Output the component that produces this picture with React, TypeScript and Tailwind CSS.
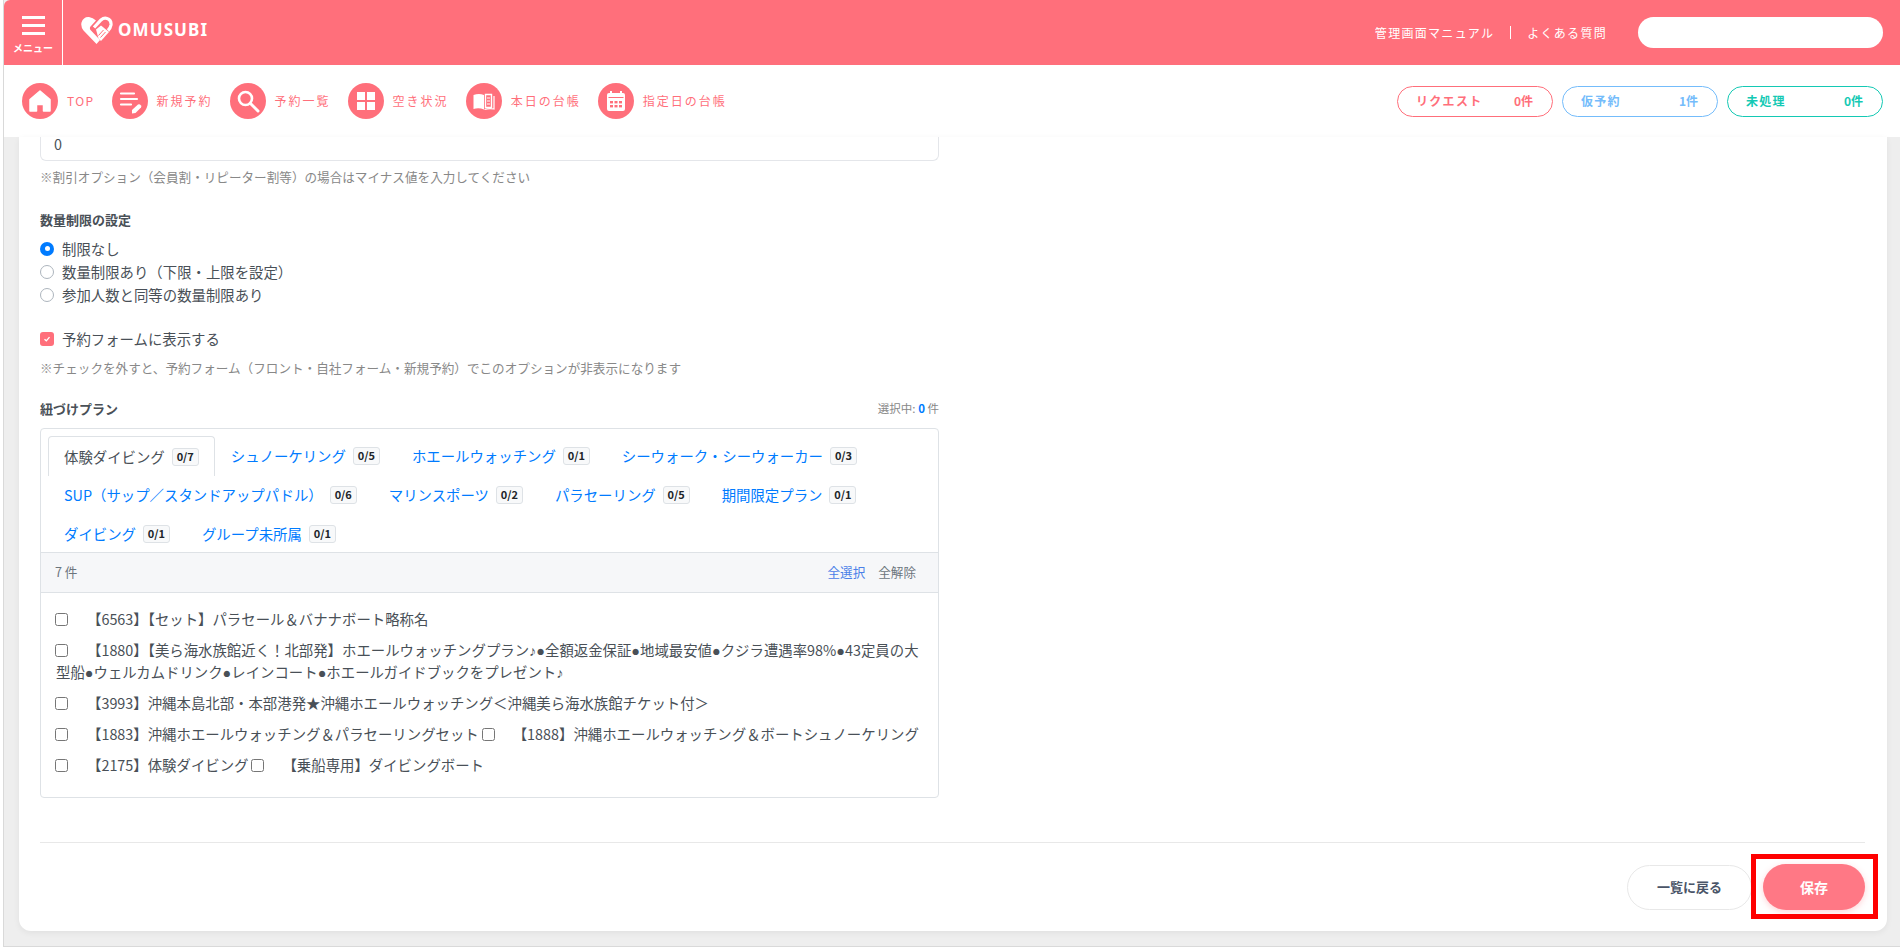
import { Fragment } from 'react';

const font = { fontFamily: '"Noto Sans CJK JP", "Noto Sans", sans-serif' };

const HomeIcon = () => (
  <svg viewBox="0 0 36 36" className="w-9 h-9">
    <path d="M18 8 L28 16.5 V28 H21.5 V21.5 H14.5 V28 H8 V16.5 Z" fill="#fff" stroke="#fff" strokeWidth="1.5" strokeLinejoin="round" />
  </svg>
);

const EditIcon = () => (
  <svg viewBox="0 0 36 36" className="w-9 h-9">
    <path d="M9 10.5 H22 M9 16 H25 M9 21.5 H19" stroke="#fff" strokeWidth="2.2" strokeLinecap="round" fill="none" />
    <path d="M20 27 L26 21.5 Q27 20.8 28 21.5 L29 22.5 Q29.8 23.5 29 24.5 L23.5 30 L20 30.5 Z" fill="#fff" />
  </svg>
);

const SearchIcon = () => (
  <svg viewBox="0 0 36 36" className="w-9 h-9">
    <circle cx="15.5" cy="15.5" r="6.5" fill="none" stroke="#fff" strokeWidth="2.6" />
    <path d="M20.5 20.5 L28 28" stroke="#fff" strokeWidth="3" strokeLinecap="round" />
  </svg>
);

const GridIcon = () => (
  <svg viewBox="0 0 36 36" className="w-9 h-9" fill="#fff">
    <rect x="9" y="9" width="8" height="8" />
    <rect x="19" y="9" width="8" height="8" />
    <rect x="9" y="19" width="8" height="8" />
    <rect x="19" y="19" width="8" height="8" />
  </svg>
);

const BookIcon = () => (
  <svg viewBox="0 0 36 36" className="w-9 h-9">
    <path d="M7.5 12 Q13 10 18 12 V26.5 Q13 24.5 7.5 26 Z" fill="#fff" />
    <path d="M19.5 11.5 H25.5 V24.5 H19.5 Z" fill="none" stroke="#fff" strokeWidth="1.4" />
    <path d="M21 15 H24 M21 18 H24 M21 21 H24" stroke="#fff" strokeWidth="1.2" />
    <path d="M18.5 26.5 Q23 25 28 26 V13" fill="none" stroke="#fff" strokeWidth="1.2" />
  </svg>
);

const CalendarIcon = () => (
  <svg viewBox="0 0 36 36" className="w-9 h-9">
    <rect x="9" y="10" width="18" height="18" rx="2" fill="#fff" />
    <rect x="12" y="8" width="2" height="3" fill="#fff" />
    <rect x="22" y="8" width="2" height="3" fill="#fff" />
    <rect x="10.5" y="14" width="15" height="1" fill="#ff6f7b" />
    <g fill="#ff6f7b">
      <rect x="12" y="18" width="3" height="2.4" />
      <rect x="16.5" y="18" width="3" height="2.4" />
      <rect x="21" y="18" width="3" height="2.4" />
      <rect x="12" y="22" width="3" height="2.4" />
      <rect x="16.5" y="22" width="3" height="2.4" />
      <rect x="21" y="22" width="3" height="2.4" />
    </g>
  </svg>
);

const Logo = () => (
  <svg viewBox="0 0 32 28" className="w-[32px] h-[28px]">
    <path d="M15.5 28 L2.5 14.5 Q-0.5 10.5 0.5 6.5 Q2.5 0.5 8 1 Q12 1.5 15 4.5 L9.5 10.5 Q8 12.5 10 14.5 L19 24 Z" fill="#fff" />
    <path d="M13 11.5 L20 4 Q23 1.5 26 2.5 Q30.5 4 30 9 Q29.5 12 27 14.5" fill="none" stroke="#fff" strokeWidth="3.2" />
    <path d="M15 13.5 L20 9.5 L28 16 L20 25 L17.5 22.5 Z" fill="#fff" />
    <path d="M17.5 19.5 L22.5 14 M19.5 21.5 L24.5 16" stroke="#ff6f7b" strokeWidth="1" />
  </svg>
);

const navItems = [
  { label: 'TOP', icon: <HomeIcon /> },
  { label: '新規予約', icon: <EditIcon /> },
  { label: '予約一覧', icon: <SearchIcon /> },
  { label: '空き状況', icon: <GridIcon /> },
  { label: '本日の台帳', icon: <BookIcon /> },
  { label: '指定日の台帳', icon: <CalendarIcon /> },
];

const tabRows = [
  [
    { name: '体験ダイビング', count: '0/7', active: true },
    { name: 'シュノーケリング', count: '0/5' },
    { name: 'ホエールウォッチング', count: '0/1' },
    { name: 'シーウォーク・シーウォーカー', count: '0/3' },
  ],
  [
    { name: 'SUP（サップ／スタンドアップパドル）', count: '0/6' },
    { name: 'マリンスポーツ', count: '0/2' },
    { name: 'パラセーリング', count: '0/5' },
    { name: '期間限定プラン', count: '0/1' },
  ],
  [
    { name: 'ダイビング', count: '0/1' },
    { name: 'グループ未所属', count: '0/1' },
  ],
];

const Radio = ({ checked, label }: { checked?: boolean; label: string }) => (
  <div className="flex items-center h-[23px] text-[14.4px] text-[#495057]">
    {checked ? (
      <span className="w-[14px] h-[14px] rounded-full bg-[#007bff] flex items-center justify-center mr-[8px]">
        <span className="w-[5px] h-[5px] rounded-full bg-white" />
      </span>
    ) : (
      <span className="w-[14px] h-[14px] rounded-full border border-[#adb5bd] bg-white mr-[8px]" />
    )}
    {label}
  </div>
);

const planRows = [
  ['【6563】【セット】パラセール＆バナナボート略称名'],
  ['【1880】【美ら海水族館近く！北部発】ホエールウォッチングプラン♪●全額返金保証●地域最安値●クジラ遭遇率98%●43定員の大型船●ウェルカムドリンク●レインコート●ホエールガイドブックをプレゼント♪'],
  ['【3993】沖縄本島北部・本部港発★沖縄ホエールウォッチング＜沖縄美ら海水族館チケット付＞'],
  ['【1883】沖縄ホエールウォッチング＆パラセーリングセット', '【1888】沖縄ホエールウォッチング＆ボートシュノーケリング'],
  ['【2175】体験ダイビング', '【乗船専用】ダイビングボート'],
];

// the ● and ♪ in plan names come from a narrower Latin font in the original
const PlanText = ({ text }: { text: string }) => (
  <>
    {text.split(/([●♪])/).map((part, i) =>
      part === '●' || part === '♪' ? (
        <span key={i} className="font-['Liberation_Sans'] leading-none">{part}</span>
      ) : (
        <Fragment key={i}>{part}</Fragment>
      ),
    )}
  </>
);

export default function App() {
  return (
    <div style={font} className="relative h-[950px] w-[1900px] overflow-hidden bg-white pl-[3px]">
      <div className="flex flex-col h-[947px] border-l border-b border-[#d9d9d9] bg-[#eeeeee]">
        {/* Header */}
        <header className="h-[65px] shrink-0 flex items-center bg-[#ff6f7b] rounded-tl-md text-white">
          <div className="w-[59px] h-full border-r border-white flex flex-col items-center pt-[16px]">
            <span className="w-[23px] h-[2.5px] bg-white" />
            <span className="w-[23px] h-[2.5px] bg-white mt-[5.5px]" />
            <span className="w-[23px] h-[2.5px] bg-white mt-[5.5px]" />
            <span className="text-[10px] font-bold mt-[8px] leading-none">メニュー</span>
          </div>
          <div className="flex items-center ml-[18px] -mt-[5px]">
            <Logo />
            <span className="ml-[5px] text-[17px] font-bold tracking-[1.1px]" style={{ fontFamily: '"Noto Sans", sans-serif' }}>OMUSUBI</span>
          </div>
          <div className="ml-auto flex items-center text-xs tracking-[1.3px]">
            <span>管理画面マニュアル</span>
            <span className="w-px h-[13px] bg-white mx-[16px]" />
            <span>よくある質問</span>
            <div className="w-[245px] h-[31px] rounded-full bg-white ml-[31px] mr-[17px]" />
          </div>
        </header>

        {/* Shortcut bar */}
        <nav className="h-[72px] shrink-0 bg-white flex items-center pl-[18px] pr-[17px]">
          <div className="flex items-center gap-[17px]">
            {navItems.map((item) => (
              <div key={item.label} className="flex items-center gap-[9px]">
                <div className="w-9 h-9 rounded-full bg-[#ff6f7b] flex items-center justify-center">{item.icon}</div>
                <span className={item.label === 'TOP' ? 'text-xs tracking-[1.4px] text-[#ff6f7b]' : 'text-xs tracking-[2px] text-[#ff6f7b]'}>{item.label}</span>
              </div>
            ))}
          </div>
          <div className="ml-auto flex gap-[9px] text-xs font-bold tracking-[1.3px]">
            <div className="w-[156px] h-[31px] rounded-full border border-[#ff6f7b] text-[#ff6f7b] flex items-center justify-between pl-[18px] pr-[19px]"><span>リクエスト</span><span className="tracking-normal">0件</span></div>
            <div className="w-[156px] h-[31px] rounded-full border border-[#74bcfb] text-[#74bcfb] flex items-center justify-between pl-[18px] pr-[19px]"><span>仮予約</span><span className="tracking-normal">1件</span></div>
            <div className="w-[156px] h-[31px] rounded-full border border-[#14c9b4] text-[#14c9b4] flex items-center justify-between pl-[18px] pr-[19px]"><span>未処理</span><span className="tracking-normal">0件</span></div>
          </div>
        </nav>

        {/* Main card */}
        <main className="flex-1 min-h-0 pl-[15px] pr-[13px]">
          <div className="h-[794px] bg-white rounded-b-xl shadow-[0_2px_6px_rgba(0,0,0,0.06)] pl-[21px] pr-[22px]">
            <div className="w-[899px]">
              <div className="h-[24px] border-x border-b border-[#e4e6ea] rounded-b-md px-[13px] text-[14.4px] text-[#495057] leading-[14px]">0</div>
              <p className="text-[12.6px] text-[#888] mt-[7px] leading-[18px]">※割引オプション（会員割・リピーター割等）の場合はマイナス値を入力してください</p>

              <h3 className="text-[13px] font-bold text-[#495057] mt-[24px] leading-[20px]">数量制限の設定</h3>
              <div className="mt-[7px]">
                <Radio checked label="制限なし" />
                <Radio label="数量制限あり（下限・上限を設定）" />
                <Radio label="参加人数と同等の数量制限あり" />
              </div>

              <div className="flex items-center mt-[22px] text-[14.4px] text-[#495057] h-[22px]">
                <span className="w-[14px] h-[14px] rounded-[3px] bg-[#ff6f7b] flex items-center justify-center mr-[8px]">
                  <svg viewBox="0 0 12 12" className="w-[10px] h-[10px]"><path d="M3 6.2 L5.2 8.2 L9 3.8" stroke="#fff" strokeWidth="1.6" fill="none" /></svg>
                </span>
                予約フォームに表示する
              </div>
              <p className="text-[12.6px] text-[#888] mt-[9px] leading-[18px]">※チェックを外すと、予約フォーム（フロント・自社フォーム・新規予約）でこのオプションが非表示になります</p>

              <div className="flex items-center justify-between mt-[22px] h-[20px]">
                <h3 className="text-[13px] font-bold text-[#495057]">紐づけプラン</h3>
                <span className="text-[11.5px] text-[#888]">選択中: <b className="text-[#007bff]">0</b> 件</span>
              </div>

              {/* Plan box */}
              <div className="mt-[9px] h-[370px] border border-[#dee2e6] rounded-[4px] flex flex-col">
                <div className="h-[123px] pt-[7px] pl-[7px] text-[14.4px]">
                  {tabRows.map((row, i) => (
                    <div key={i} className="flex h-[39px]">
                      {row.map((tab) => (
                        <div
                          key={tab.name}
                          className={
                            tab.active
                              ? 'flex items-center px-[15px] h-[40px] border border-b-0 border-[#dee2e6] rounded-t-[4px] bg-white text-[#495057]'
                              : 'flex items-center px-[15px] h-[39px] border border-transparent text-[#007bff]'
                          }
                        >
                          {tab.name}
                          <span className="ml-[7px] w-[27px] h-[18px] flex items-center justify-center border border-[#dee2e6] rounded-[3px] bg-[#f8f9fa] text-[11px] font-bold text-[#212529]">
                            {tab.count}
                          </span>
                        </div>
                      ))}
                    </div>
                  ))}
                </div>
                <div className="h-[41px] border-y border-[#dee2e6] bg-[#f6f7f9] flex items-center justify-between pl-[14px] pr-[22px] text-[12.6px]">
                  <span className="text-[#6c757d]">7 件</span>
                  <div className="flex gap-[13px]">
                    <span className="text-[#4a80e8]">全選択</span>
                    <span className="text-[#6c757d]">全解除</span>
                  </div>
                </div>
                <div className="px-[15px] pt-[15px] text-[14.4px] text-[#495057] leading-[22px]">
                  {planRows.map((parts, i) => (
                    <div key={i} className="mb-[9px]">
                      {parts.map((text, j) => (
                        <Fragment key={j}>
                          <input
                            type="checkbox"
                            className={j === 0
                              ? 'inline-block align-[-1px] w-[13px] h-[13px] -ml-[1px] mr-[19px]'
                              : 'inline-block align-[-1px] w-[13px] h-[13px] ml-[3px] mr-[18px]'}
                          />
                          <PlanText text={text} />
                        </Fragment>
                      ))}
                    </div>
                  ))}
                </div>
              </div>
            </div>

            {/* Footer */}
            <div className="mt-[44px] border-t border-[#e8e8e8] pt-[21px] flex justify-end items-center gap-[11px]">
              <button className="w-[125px] h-[45px] rounded-full border border-[#e8e8e8] bg-white text-[13px] font-bold text-[#4a5568]">一覧に戻る</button>
              <button className="w-[102px] h-[46px] rounded-full bg-[#ff7885] text-[14px] font-bold text-white shadow-[0_2px_6px_rgba(255,111,123,0.3)]">保存</button>
            </div>
          </div>
        </main>
      </div>

      {/* Red highlight annotation */}
      <div className="absolute left-[1751px] top-[854px] w-[127px] h-[65px] border-[5px] border-[#ff0000]" />
    </div>
  );
}
